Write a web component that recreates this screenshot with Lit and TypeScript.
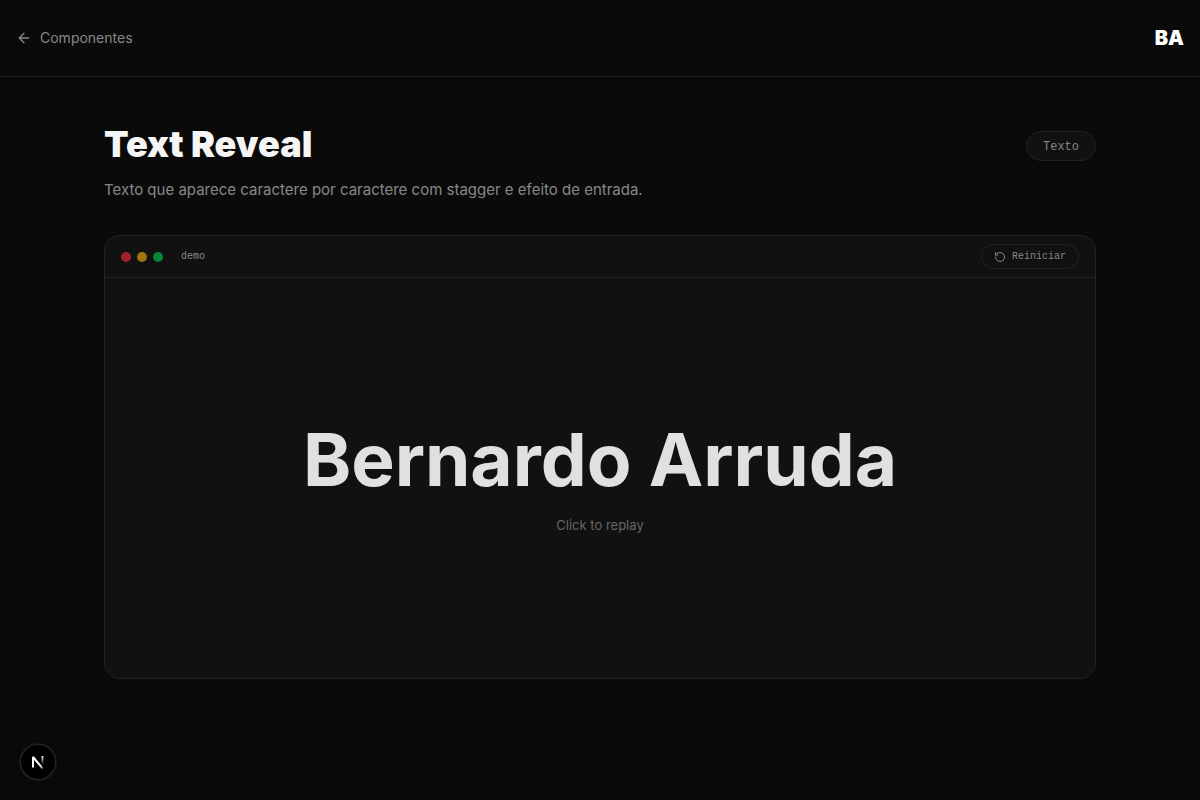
import { LitElement, html, css } from "lit";
import { customElement } from "lit/decorators.js";

@customElement("app-root")
export class AppRoot extends LitElement {
  static styles = css`
    :host {
      display: block;
      min-height: 100vh;
      background: #0a0a0a;
      color: #f5f5f5;
      font-family: "Inter", "Liberation Sans", sans-serif;
    }
    * {
      box-sizing: border-box;
    }
    h1,
    p {
      margin: 0;
    }
    button {
      font: inherit;
      color: inherit;
      background: none;
      border: 0;
      padding: 0;
      cursor: pointer;
    }
    .header {
      display: flex;
      align-items: center;
      justify-content: space-between;
      padding: 24px 16px;
      border-bottom: 1px solid #222;
    }
    .back {
      display: flex;
      align-items: center;
      gap: 8px;
      color: #888;
      font-size: 14px;
      line-height: 20px;
      text-decoration: none;
    }
    .back svg {
      display: block;
    }
    .logo {
      color: #fff;
      font-size: 20px;
      line-height: 28px;
      font-weight: 900;
      text-decoration: none;
    }
    .main {
      max-width: 1024px;
      margin: 0 auto;
      padding: 48px 16px;
    }
    .intro {
      display: flex;
      align-items: flex-start;
      justify-content: space-between;
      gap: 16px;
      margin-bottom: 32px;
    }
    .title {
      font-size: 36px;
      line-height: 38px;
      font-weight: 900;
    }
    .lead {
      margin-top: 14px;
      color: #888;
      font-size: 15px;
      line-height: 26px;
    }
    .tag {
      margin-top: 6px;
      padding: 7px 16px 5px;
      border: 1px solid #222;
      border-radius: 15px;
      background: #111;
      color: #888;
      font-family: "Liberation Mono", monospace;
      font-size: 12px;
      line-height: 16px;
    }
    .card {
      border: 1px solid #222;
      border-radius: 16px;
      background: #111;
      overflow: hidden;
    }
    .bar {
      display: flex;
      align-items: center;
      justify-content: space-between;
      padding: 8px 16px;
      border-bottom: 1px solid #222;
      color: #888;
      font-family: "Liberation Mono", monospace;
      font-size: 10px;
      line-height: 17px;
    }
    .window {
      display: flex;
      align-items: center;
      gap: 6px;
    }
    .dot {
      width: 10px;
      height: 10px;
      border-radius: 50%;
    }
    .red {
      background: #a0232a;
    }
    .yellow {
      background: #a1760b;
    }
    .green {
      background: #078638;
    }
    .name {
      margin-left: 12px;
    }
    .restart {
      display: flex;
      align-items: center;
      gap: 6px;
      padding: 3px 12px;
      border: 1px solid #222;
      border-radius: 13px;
    }
    .restart svg {
      display: block;
    }
    .stage {
      display: flex;
      flex-direction: column;
      align-items: center;
      justify-content: center;
      gap: 16px;
      width: 100%;
      min-height: 400px;
    }
    .reveal {
      color: #e0e0e0;
      font-size: 73px;
      line-height: 78px;
      font-weight: 700;
    }
    .hint {
      color: #666;
      font-size: 13px;
      line-height: 20px;
    }
    .devtools {
      position: fixed;
      left: 20px;
      bottom: 20px;
      width: 36px;
      height: 36px;
      border-radius: 50%;
      background: #000;
      box-shadow:
        inset 0 0 0 1px #2a2a2a,
        0 0 0 1px #171717,
        0 16px 32px -8px rgba(0, 0, 0, 0.24);
    }
    .devtools svg {
      display: block;
      margin: auto;
    }
  `;

  private replay() {
    this.renderRoot
      .querySelector(".reveal")
      ?.animate([{ opacity: 0 }, { opacity: 1 }], { duration: 600 });
  }

  render() {
    return html`
      <header class="header">
        <a class="back" href="#componentes">
          <svg width="16" height="16" viewBox="0 0 24 24" fill="none" stroke="currentColor" stroke-width="2" stroke-linecap="round" stroke-linejoin="round" aria-hidden="true">
            <path d="m12 19-7-7 7-7" />
            <path d="M19 12H5" />
          </svg>
          <span>Componentes</span>
        </a>
        <a class="logo" href="#inicio">BA</a>
      </header>
      <main class="main">
        <div class="intro">
          <div>
            <h1 class="title">Text Reveal</h1>
            <p class="lead">Texto que aparece caractere por caractere com stagger e efeito de entrada.</p>
          </div>
          <span class="tag">Texto</span>
        </div>
        <section class="card">
          <div class="bar">
            <div class="window">
              <span class="dot red"></span>
              <span class="dot yellow"></span>
              <span class="dot green"></span>
              <span class="name">demo</span>
            </div>
            <button class="restart" @click=${this.replay}>
              <svg width="12" height="12" viewBox="0 0 24 24" fill="none" stroke="currentColor" stroke-width="2" stroke-linecap="round" stroke-linejoin="round" aria-hidden="true">
                <path d="M3 12a9 9 0 1 0 9-9 9.75 9.75 0 0 0-6.74 2.74L3 8" />
                <path d="M3 3v5h5" />
              </svg>
              <span>Reiniciar</span>
            </button>
          </div>
          <button class="stage" @click=${this.replay}>
            <span class="reveal">Bernardo Arruda</span>
            <span class="hint">Click to replay</span>
          </button>
        </section>
      </main>
      <button class="devtools" aria-label="Next.js">
        <svg width="14" height="14" viewBox="0 0 14 14" fill="none" aria-hidden="true">
          <defs>
            <linearGradient id="diagonal" x1="8" y1="8" x2="12.5" y2="13.5" gradientUnits="userSpaceOnUse">
              <stop stop-color="#fff" />
              <stop offset="0.6" stop-color="#fff" stop-opacity="0.8" />
              <stop offset="1" stop-color="#fff" stop-opacity="0.1" />
            </linearGradient>
            <linearGradient id="stem" x1="11" y1="1" x2="11" y2="10" gradientUnits="userSpaceOnUse">
              <stop stop-color="#fff" />
              <stop offset="1" stop-color="#fff" stop-opacity="0" />
            </linearGradient>
          </defs>
          <path d="M2 12.5V2L12 14" stroke="url(#diagonal)" stroke-width="2" stroke-linejoin="bevel" />
          <path d="M11.5 1V10" stroke="url(#stem)" stroke-width="1.8" />
        </svg>
      </button>
    `;
  }
}
